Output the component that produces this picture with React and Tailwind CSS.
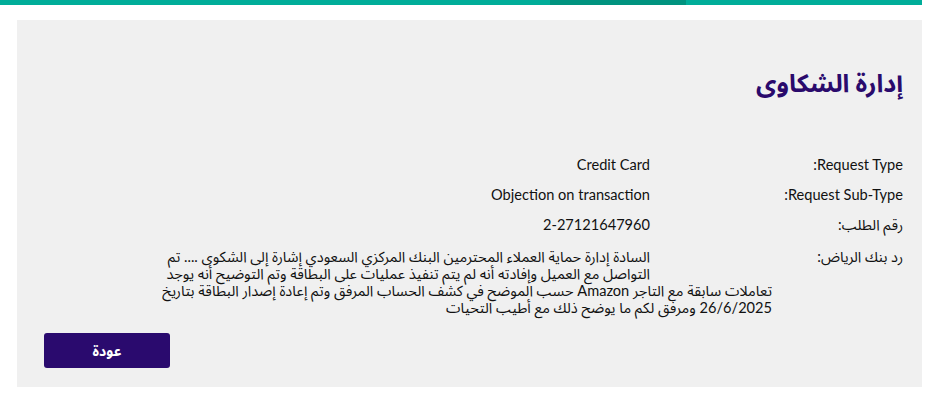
const font = { fontFamily: '"Lato", "Noto Sans Arabic", "DejaVu Sans", sans-serif' };

const rows = [
  { label: "Request Type:", value: "Credit Card" },
  { label: "Request Sub-Type:", value: "Objection on transaction" },
  { label: "رقم الطلب:", value: "2-27121647960" },
];

export default function App() {
  return (
    <div dir="rtl" className="min-h-[400px] bg-white text-[#111]" style={font}>
      {/* top accent bar */}
      <div className="mr-[17px] flex h-[5px] bg-[#00ad99]">
        <div className="w-[236px]" />
        <div className="w-[136px] bg-[#00937f]" />
      </div>

      <div className="mx-[17px] mt-[15px] bg-[#f0f0f0] pb-[19px] pl-[27px] pr-[19px] pt-[46px]">
        <h1 className="text-[25px] font-bold leading-[32px] text-[#2a0a6c]">إدارة الشكاوى</h1>

        <div className="mt-[57px] flex flex-col gap-[10px] text-[14.6px] leading-[20px]">
          {rows.map((r) => (
            <div key={r.label} className="flex">
              <div className="w-[253px] shrink-0">{r.label}</div>
              <div>{r.value}</div>
            </div>
          ))}
        </div>

        <div className="mt-[13px] flex text-[14.6px] leading-[17px]">
          <div className="w-[131px] shrink-0">رد بنك الرياض:</div>
          <p className="whitespace-nowrap">
            <span className="float-right h-[34px] w-[122px]" />
            السادة إدارة حماية العملاء المحترمين البنك المركزي السعودي إشارة إلى الشكوى .... تم
            <br />
            التواصل مع العميل وإفادته أنه لم يتم تنفيذ عمليات على البطاقة وتم التوضيح أنه يوجد
            <br />
            تعاملات سابقة مع التاجر Amazon حسب الموضح في كشف الحساب المرفق وتم إعادة إصدار البطاقة بتاريخ
            <br />
            26/6/2025 ومرفق لكم ما يوضح ذلك مع أطيب التحيات
          </p>
        </div>

        <div className="mt-[17px] flex justify-end">
          <button className="h-[35px] w-[126px] rounded-[3px] bg-[#2a0a6e] text-[14px] font-bold text-white">
            عودة
          </button>
        </div>
      </div>
    </div>
  );
}
